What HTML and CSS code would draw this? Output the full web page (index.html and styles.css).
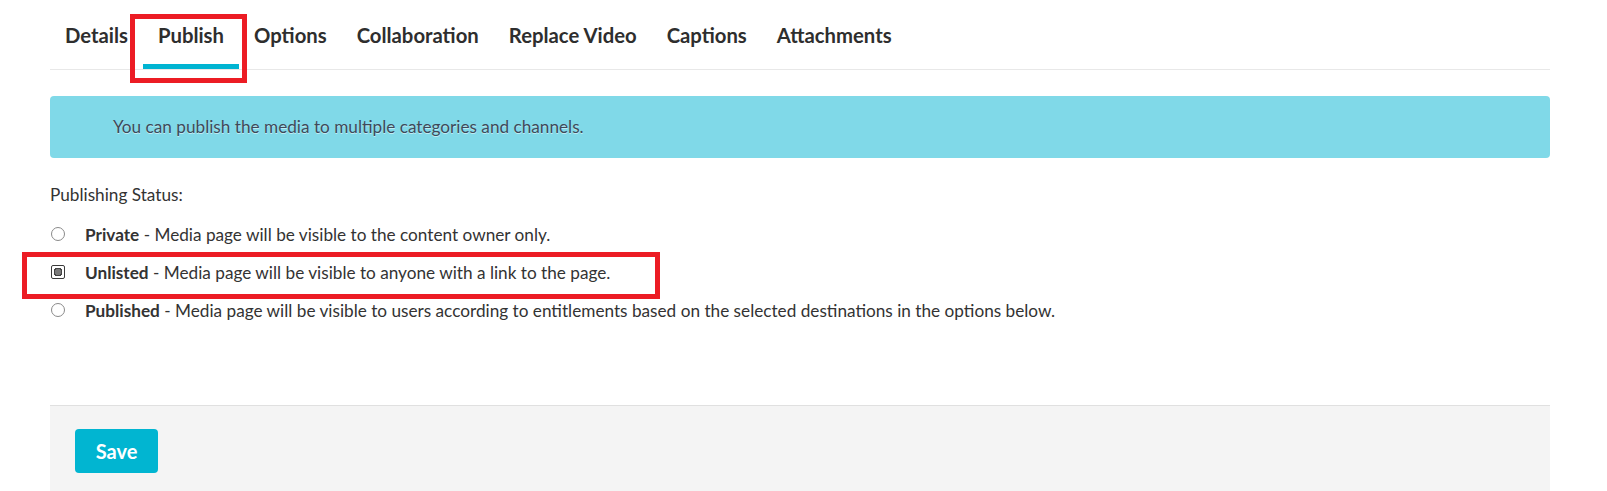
FILE: index.html
```html
<!DOCTYPE html>
<html lang="en">
<head>
<meta charset="utf-8">
<title>Publish</title>
<link rel="stylesheet" href="styles.css">
</head>
<body>
<div class="page">
  <nav class="tabs">
    <a class="tab">Details</a>
    <a class="tab active">Publish</a>
    <a class="tab">Options</a>
    <a class="tab">Collaboration</a>
    <a class="tab">Replace Video</a>
    <a class="tab">Captions</a>
    <a class="tab">Attachments</a>
  </nav>

  <div class="alert">You can publish the media to multiple categories and channels.</div>

  <div class="status-label">Publishing Status:</div>
  <div class="options">
    <label class="option"><input type="radio" name="status" class="radio"><span><b>Private</b> - Media page will be visible to the content owner only.</span></label>
    <label class="option"><input type="radio" name="status" class="radio" checked><span><b>Unlisted</b> - Media page will be visible to anyone with a link to the page.</span></label>
    <label class="option"><input type="radio" name="status" class="radio"><span><b>Published</b> - Media page will be visible to users according to entitlements based on the selected destinations in the options below.</span></label>
  </div>

  <div class="footer">
    <button class="save">Save</button>
  </div>

  <div class="mark mark-tab"></div>
  <div class="mark mark-option"></div>
</div>
</body>
</html>
```

FILE: styles.css
```css
html, body {
  margin: 0;
  padding: 0;
  background: #fff;
}
body {
  font-family: Lato, "Open Sans", sans-serif;
  color: #333;
  overflow: hidden;
  height: 491px;
}
.page {
  position: relative;
  padding: 0 57px 0 50px;
}
.tabs {
  display: flex;
  border-bottom: 1px solid #e8e8e8;
}
.tab {
  font-size: 20.3px;
  font-weight: 700;
  line-height: 24px;
  color: #2e2e2e;
  padding: 23px 15px 17px;
  border-bottom: 5px solid transparent;
}
.tab.active {
  border-bottom-color: #00b4d2;
}
.alert {
  margin-top: 26px;
  background: #80d9e8;
  border-radius: 4px;
  padding: 21px 63px;
  font-size: 17.2px;
  line-height: 20px;
  color: #3d4a5a;
  text-shadow: 0 1px 0 rgba(255,255,255,0.5);
}
.status-label {
  margin-top: 27px;
  font-size: 17.2px;
  line-height: 20px;
}
.options {
  margin-top: 10px;
  display: flex;
  flex-direction: column;
}
.option {
  display: flex;
  align-items: center;
  height: 38px;
  font-size: 17.2px;
}
.option b {
  font-weight: 700;
}
.radio {
  -webkit-appearance: none;
  appearance: none;
  margin: 0 20px 0 1px;
  width: 14px;
  height: 14px;
  border: 1px solid #8a8a8a;
  border-radius: 50%;
  background: #fff;
  box-sizing: border-box;
  flex: none;
}
.radio:checked {
  border-radius: 2px;
  border-color: #3a3a3a;
  background: radial-gradient(circle at center, #7a7a7a 0 3.5px, #444 3.5px 4.5px, #fff 4.5px);
}
.footer {
  margin-top: 76px;
  border-top: 1px solid #e0e0e0;
  background: #f4f4f4;
  padding: 23px 25px 30px;
}
.save {
  width: 83px;
  height: 44px;
  border: none;
  border-radius: 4px;
  background: #01b5d1;
  color: #fff;
  font-family: Lato, sans-serif;
  font-size: 20px;
  font-weight: 700;
  padding: 0;
}
.mark {
  position: absolute;
  border: 5px solid #ec1c24;
  box-sizing: border-box;
}
.mark-tab {
  left: 130px;
  top: 14px;
  width: 117px;
  height: 69px;
}
.mark-option {
  left: 22px;
  top: 252px;
  width: 638px;
  height: 47px;
}
```
